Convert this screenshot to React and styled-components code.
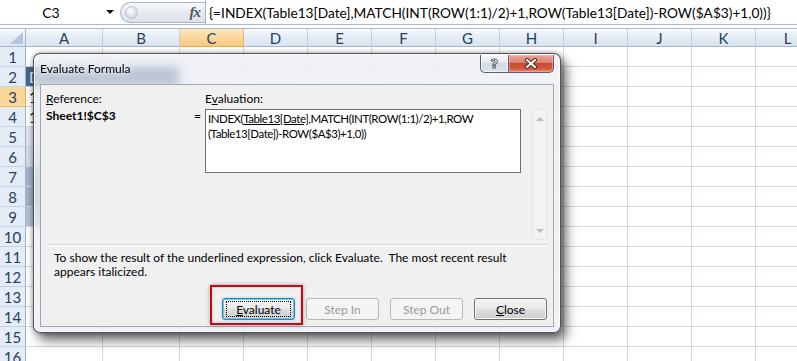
import React from "react";
import styled, { createGlobalStyle, css } from "styled-components";

const UI_FONT = `"Lato", "Liberation Sans", sans-serif`;
const SHEET_FONT = `"Lato", "Liberation Sans", sans-serif`;

const COLUMNS = ["A", "B", "C", "D", "E", "F", "G", "H", "I", "J", "K", "L"];
const ROWS = Array.from({ length: 16 }, (_, i) => i + 1);
const ACTIVE_COL = "C";
const ACTIVE_ROW = 3;

// table cells partly visible at the left of the dialog
const CELLS = {
  A2: { text: "D", fill: "#4a658d", color: "#fff" },
  B2: { fill: "#4a658d" },
  A3: { text: "1" },
  A4: { text: "1" },
  A5: { fill: "#dfe5ee" },
  A6: { fill: "#d3dbe8" },
  A7: { fill: "#a7b4c9" },
  A8: { fill: "#a2b0c6" },
  A9: { fill: "#b3bfd1" },
};

const GlobalStyle = createGlobalStyle`
  html, body {
    margin: 0;
    padding: 0;
    background: #fff;
  }
  body {
    width: 797px;
    height: 361px;
    overflow: hidden;
  }
`;

const Screen = styled.div`
  position: relative;
  width: 797px;
  height: 361px;
  overflow: hidden;
  background: #fff;
  font-family: ${SHEET_FONT};
`;

/* ---------- formula bar ---------- */

const FormulaBar = styled.div`
  display: flex;
  height: 24px;
  border-bottom: 1px solid #a9b8cb;
  background: #fff;
`;

const NameBox = styled.div`
  display: grid;
  grid-template-columns: 102px 16px;
  align-items: center;
  flex-shrink: 0;
  width: 118px;
  font-size: 14px;
  color: #000;
`;

const NameText = styled.span`
  text-align: center;
`;

const DropArrow = styled.span`
  justify-self: center;
  width: 0;
  height: 0;
  border-left: 4px solid transparent;
  border-right: 4px solid transparent;
  border-top: 4px solid #111;
`;

const FxPill = styled.div`
  display: flex;
  align-items: center;
  justify-content: space-between;
  flex-shrink: 0;
  box-sizing: border-box;
  width: 85px;
  height: 21px;
  margin: 2px 0 0 2px;
  padding: 0 5px 0 4px;
  border: 1px solid #a6b5c8;
  border-right: none;
  border-radius: 11px 0 0 11px;
  background: linear-gradient(#f7f9fb, #e4e9ef 55%, #dce2ea);
`;

const Knob = styled.span`
  width: 11px;
  height: 11px;
  border-radius: 50%;
  border: 1px solid #b9c3cf;
  background: radial-gradient(circle at 40% 35%, #ffffff, #d4dae2 70%, #b8c1cc);
`;

const FxLabel = styled.span`
  font-family: "Liberation Serif", serif;
  font-style: italic;
  font-weight: bold;
  font-size: 15px;
  color: #55595f;
  letter-spacing: -1px;
`;

const FormulaInput = styled.div`
  flex: 1;
  min-width: 0;
  display: flex;
  align-items: center;
  padding-left: 3px;
  border-left: 1px solid #a6b5c8;
  font-size: 13.7px;
  color: #000;
  white-space: nowrap;
  overflow: hidden;
`;

const Band = styled.div`
  height: 3px;
  border-bottom: 1px solid #a9b8cb;
  background: #fff;
`;

/* ---------- sheet grid ---------- */

const Sheet = styled.div`
  display: grid;
  grid-template-columns: 26px 77px 77px repeat(10, 64px);
  grid-template-rows: 18px repeat(16, 20px);
`;

const headerBg = css`
  background: linear-gradient(#f7fafd, #e6edf6 45%, #dae3f0);
`;

const activeBg = css`
  background: linear-gradient(#fce7bd, #f9d79d 50%, #f6c97e);
`;

const Corner = styled.div`
  position: relative;
  ${headerBg};
  border-right: 1px solid #9eb6ce;
  border-bottom: 1px solid #9eb6ce;
  box-sizing: border-box;
`;

const ColHeader = styled.div`
  display: flex;
  align-items: center;
  justify-content: center;
  box-sizing: border-box;
  ${(p) => (p.$active ? activeBg : headerBg)};
  border-right: 1px solid ${(p) => (p.$active ? "#f2b95b" : "#c2cfdf")};
  border-bottom: 1px solid ${(p) => (p.$active ? "#f0a93a" : "#9eb6ce")};
  font-size: 15px;
  color: #27405e;
`;

const RowHeader = styled.div`
  display: flex;
  align-items: center;
  justify-content: center;
  box-sizing: border-box;
  background: ${(p) => (p.$active ? "#f9d699" : "#e4ecf7")};
  border-right: 1px solid ${(p) => (p.$active ? "#f0a93a" : "#9eb6ce")};
  border-bottom: 1px solid ${(p) => (p.$active ? "#f2b95b" : "#c5d2e2")};
  font-size: 15px;
  color: #27405e;
`;

const Cell = styled.div`
  display: flex;
  align-items: center;
  box-sizing: border-box;
  padding-left: 3px;
  overflow: hidden;
  white-space: nowrap;
  background: ${(p) => p.$fill || "#fff"};
  color: ${(p) => p.$color || "#000"};
  border-right: 1px solid #d0d7e5;
  border-bottom: 1px solid #d0d7e5;
  font-size: 15px;
`;

/* ---------- dialog ---------- */

const Dialog = styled.div`
  position: absolute;
  left: 33px;
  top: 53px;
  width: 528px;
  height: 280px;
  box-sizing: border-box;
  display: flex;
  flex-direction: column;
  padding: 0 6px 5px 6px;
  border: 1px solid rgba(38, 46, 56, 0.8);
  border-radius: 7px;
  background: rgba(233, 237, 242, 0.7);
  backdrop-filter: blur(5px);
  box-shadow: 5px 7px 12px rgba(0, 0, 0, 0.6), 0 0 5px rgba(0, 0, 0, 0.35),
    inset 0 0 0 1px rgba(255, 255, 255, 0.7);
  font-family: ${UI_FONT};
`;

const TitleBar = styled.div`
  display: flex;
  align-items: flex-start;
  height: 30px;
  flex-shrink: 0;
`;

const Title = styled.div`
  flex: 1;
  padding-top: 7px;
  font-size: 12px;
  line-height: 16px;
  color: #000;
  text-shadow: 0 0 6px #fff, 0 0 10px #fff;
`;

const CaptionButton = styled.div`
  display: flex;
  align-items: center;
  justify-content: center;
  box-sizing: border-box;
  height: 18px;
  margin-top: 1px;
  border: 1px solid #59636f;
  border-top: none;
  ${(p) =>
    p.$close
      ? css`
          width: 46px;
          border-radius: 0 0 5px 0;
          background: linear-gradient(#eba999, #dc8270 45%, #c8492f 50%, #d25a3f 80%, #e38a6b);
          box-shadow: inset 0 0 0 1px rgba(255, 200, 190, 0.5);
        `
      : css`
          width: 28px;
          border-right: none;
          border-radius: 0 0 0 5px;
          background: linear-gradient(#f6f8fa, #e6eaef 45%, #d3d9e1 50%, #dde3ea);
          box-shadow: inset 0 0 0 1px rgba(255, 255, 255, 0.6);
        `}
`;

const HelpGlyph = styled.span`
  font-family: "DejaVu Sans", sans-serif;
  font-weight: bold;
  font-size: 13px;
  line-height: 1;
  color: #fff;
  -webkit-text-stroke: 1px #525a64;
`;

const Client = styled.div`
  flex: 1;
  display: flex;
  flex-direction: column;
  box-sizing: border-box;
  padding: 6px 5px 6px 5px;
  border: 1px solid #a2a8b0;
  background: #f0f0f0;
  font-size: 12px;
  color: #000;
`;

const EvalGrid = styled.div`
  display: grid;
  grid-template-columns: 144px 15px 316px 11px 15px;
  grid-template-rows: 17px auto;
  line-height: 15px;
`;

const Label = styled.div`
  grid-row: 1;
  grid-column: ${(p) => p.$col};
`;

const RefValue = styled.div`
  grid-row: 2;
  grid-column: 1;
  font-weight: bold;
`;

const Equals = styled.div`
  grid-row: 2;
  grid-column: 2;
  text-align: center;
`;

const EvalBox = styled.div`
  grid-row: 2;
  grid-column: 3;
  box-sizing: border-box;
  height: 64px;
  margin-top: 1px;
  padding: 1px 2px;
  border: 1px solid #6e6e6e;
  background: #fff;
  font-size: 11.5px;
  letter-spacing: -0.45px;
`;

const Scrollbar = styled.div`
  grid-row: 2;
  grid-column: 5;
  display: flex;
  flex-direction: column;
  justify-content: space-between;
  align-items: center;
  box-sizing: border-box;
  height: 131px;
  margin-top: 1px;
  padding: 7px 0 6px;
  border: 1px solid #e4e4e4;
  background: #f3f3f3;
`;

const ScrollArrow = styled.span`
  width: 0;
  height: 0;
  border-left: 4px solid transparent;
  border-right: 4px solid transparent;
  ${(p) =>
    p.$down
      ? css`
          border-top: 4px solid #bdbdbd;
        `
      : css`
          border-bottom: 4px solid #bdbdbd;
        `}
`;

const Separator = styled.div`
  margin-top: 4px;
  height: 1px;
  border-top: 1px solid #d7d7d7;
  background: #fff;
`;

const Message = styled.p`
  margin: 5px 0 0;
  padding-left: 8px;
  line-height: 14px;
`;

const ButtonRow = styled.div`
  display: flex;
  justify-content: flex-end;
  gap: 11px;
  margin-top: auto;
  padding-right: 1px;
`;

const DialogButton = styled.div`
  position: relative;
  display: flex;
  align-items: center;
  justify-content: center;
  box-sizing: border-box;
  width: 73px;
  height: 22px;
  border-radius: 3px;
  font-size: 12px;
  ${(p) =>
    p.$disabled
      ? css`
          border: 1px solid #b5b9bd;
          background: #f4f4f4;
          color: #9a9a9a;
        `
      : css`
          border: 1px solid ${p.$focused ? "#3c7fb1" : "#707070"};
          background: linear-gradient(#f3f3f3, #ebebeb 48%, #dddddd 52%, #cfcfcf);
          color: #000;
          box-shadow: ${p.$focused
            ? "inset 0 0 0 1px #68c8f0, 0 0 2px rgba(60, 160, 230, 0.6)"
            : "inset 0 0 0 1px #fbfbfb"};
        `}
`;

const FocusRing = styled.span`
  position: absolute;
  inset: 2px 3px;
  border: 1px dotted #000;
`;

const Key = styled.span`
  text-decoration: underline;
`;

const Marked = styled.span`
  text-decoration: underline;
`;

const Callout = styled.div`
  position: absolute;
  left: 210px;
  top: 285px;
  width: 93px;
  height: 40px;
  box-sizing: border-box;
  border: 2px solid #c10a12;
  box-shadow: 0 0 4px rgba(0, 0, 0, 0.35), inset 0 0 3px rgba(0, 0, 0, 0.2);
`;

function CloseGlyph() {
  return (
    <svg width="14" height="11" viewBox="0 0 14 11">
      <path d="M3 2 L11 9 M11 2 L3 9" stroke="#4a2a26" strokeWidth="4.2" strokeLinecap="round" />
      <path d="M3 2 L11 9 M11 2 L3 9" stroke="#fff" strokeWidth="2.2" strokeLinecap="round" />
    </svg>
  );
}

function CornerTriangle() {
  return (
    <svg width="26" height="18" viewBox="0 0 26 18" style={{ position: "absolute", inset: 0 }}>
      <polygon points="23,3 23,15 10,15" fill="#b3c5da" />
    </svg>
  );
}

function SheetGrid() {
  return (
    <Sheet>
      <Corner>
        <CornerTriangle />
      </Corner>
      {COLUMNS.map((c) => (
        <ColHeader key={c} $active={c === ACTIVE_COL}>
          {c}
        </ColHeader>
      ))}
      {ROWS.map((r) => (
        <React.Fragment key={r}>
          <RowHeader $active={r === ACTIVE_ROW}>{r}</RowHeader>
          {COLUMNS.map((c) => {
            const cell = CELLS[c + r] || {};
            return (
              <Cell key={c} $fill={cell.fill} $color={cell.color}>
                {cell.text}
              </Cell>
            );
          })}
        </React.Fragment>
      ))}
    </Sheet>
  );
}

function EvaluateFormulaDialog() {
  return (
    <Dialog>
      <TitleBar>
        <Title>Evaluate Formula</Title>
        <CaptionButton>
          <HelpGlyph>?</HelpGlyph>
        </CaptionButton>
        <CaptionButton $close>
          <CloseGlyph />
        </CaptionButton>
      </TitleBar>
      <Client>
        <EvalGrid>
          <Label $col={1}>
            <Key>R</Key>eference:
          </Label>
          <Label $col={3}>
            E<Key>v</Key>aluation:
          </Label>
          <RefValue>Sheet1!$C$3</RefValue>
          <Equals>=</Equals>
          <EvalBox>
            INDEX(<Marked>Table13[Date]</Marked>,MATCH(INT(ROW(1:1)/2)+1,ROW
            <br />
            (Table13[Date])-ROW($A$3)+1,0))
          </EvalBox>
          <Scrollbar>
            <ScrollArrow />
            <ScrollArrow $down />
          </Scrollbar>
        </EvalGrid>
        <Separator />
        <Message>
          To show the result of the underlined expression, click Evaluate.&nbsp; The most recent result
          <br />
          appears italicized.
        </Message>
        <ButtonRow>
          <DialogButton $focused>
            <FocusRing />
            <span>
              <Key>E</Key>valuate
            </span>
          </DialogButton>
          <DialogButton $disabled>Step In</DialogButton>
          <DialogButton $disabled>Step Out</DialogButton>
          <DialogButton>
            <span>
              <Key>C</Key>lose
            </span>
          </DialogButton>
        </ButtonRow>
      </Client>
    </Dialog>
  );
}

export default function App() {
  return (
    <Screen>
      <GlobalStyle />
      <FormulaBar>
        <NameBox>
          <NameText>C3</NameText>
          <DropArrow />
        </NameBox>
        <FxPill>
          <Knob />
          <FxLabel>fx</FxLabel>
        </FxPill>
        <FormulaInput>{"{=INDEX(Table13[Date],MATCH(INT(ROW(1:1)/2)+1,ROW(Table13[Date])-ROW($A$3)+1,0))}"}</FormulaInput>
      </FormulaBar>
      <Band />
      <SheetGrid />
      <EvaluateFormulaDialog />
      <Callout />
    </Screen>
  );
}
